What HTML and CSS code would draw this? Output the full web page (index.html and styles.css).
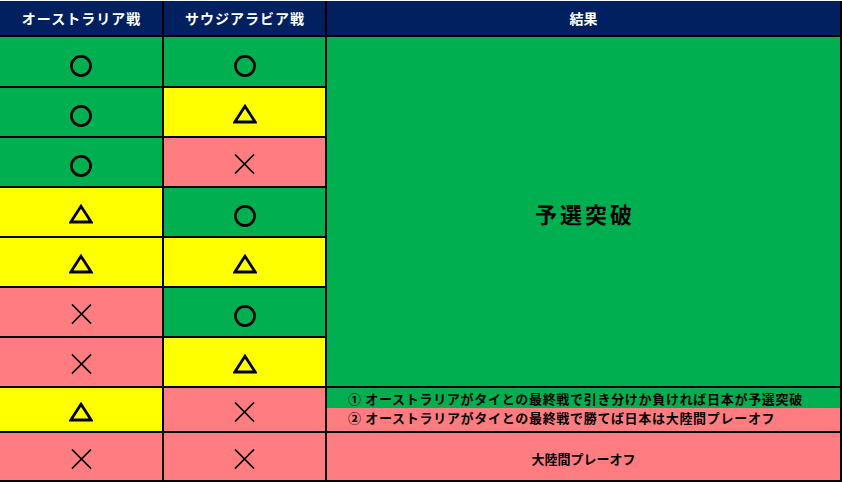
FILE: index.html
```html
<!DOCTYPE html>
<html lang="ja">
<head>
<meta charset="utf-8">
<link rel="stylesheet" href="styles.css">
</head>
<body>
<svg width="0" height="0" class="defs">
  <defs>
    <symbol id="maru" viewBox="0 0 24 24"><circle cx="12" cy="12" r="9.6" fill="none" stroke="#000" stroke-width="2.6"/></symbol>
    <symbol id="sankaku" viewBox="0 0 24 20"><polygon points="12,2.2 22.2,18 1.8,18" fill="none" stroke="#000" stroke-width="2.8" stroke-linejoin="miter"/></symbol>
    <symbol id="batsu" viewBox="0 0 24 22"><path d="M2 1 L22 21 M22 1 L2 21" fill="none" stroke="#000" stroke-width="1.6"/></symbol>
  </defs>
</svg>
<div class="table">
  <div class="head">オーストラリア戦</div>
  <div class="head">サウジアラビア戦</div>
  <div class="head result-head">結果</div>

  <div class="cell green"><svg class="sym maru"><use href="#maru"/></svg></div>
  <div class="cell green"><svg class="sym maru"><use href="#maru"/></svg></div>
  <div class="big green">予選突破</div>

  <div class="cell green"><svg class="sym maru"><use href="#maru"/></svg></div>
  <div class="cell yellow"><svg class="sym tri"><use href="#sankaku"/></svg></div>

  <div class="cell green"><svg class="sym maru"><use href="#maru"/></svg></div>
  <div class="cell pink"><svg class="sym cross"><use href="#batsu"/></svg></div>

  <div class="cell yellow"><svg class="sym tri"><use href="#sankaku"/></svg></div>
  <div class="cell green"><svg class="sym maru"><use href="#maru"/></svg></div>

  <div class="cell yellow"><svg class="sym tri"><use href="#sankaku"/></svg></div>
  <div class="cell yellow"><svg class="sym tri"><use href="#sankaku"/></svg></div>

  <div class="cell pink"><svg class="sym cross"><use href="#batsu"/></svg></div>
  <div class="cell green"><svg class="sym maru"><use href="#maru"/></svg></div>

  <div class="cell pink"><svg class="sym cross"><use href="#batsu"/></svg></div>
  <div class="cell yellow"><svg class="sym tri"><use href="#sankaku"/></svg></div>

  <div class="cell yellow"><svg class="sym tri"><use href="#sankaku"/></svg></div>
  <div class="cell pink"><svg class="sym cross"><use href="#batsu"/></svg></div>
  <div class="split">
    <div class="note green note-a">① オーストラリアがタイとの最終戦で引き分けか負ければ日本が予選突破</div>
    <div class="note pink note-b">② オーストラリアがタイとの最終戦で勝てば日本は大陸間プレーオフ</div>
  </div>

  <div class="cell pink"><svg class="sym cross"><use href="#batsu"/></svg></div>
  <div class="cell pink"><svg class="sym cross"><use href="#batsu"/></svg></div>
  <div class="cell pink playoff">大陸間プレーオフ</div>
</div>
</body>
</html>
```
FILE: styles.css
```css
html, body {
  margin: 0;
  padding: 0;
  background: #ffffff;
}
body {
  font-family: "Noto Sans CJK JP", "Noto Sans", sans-serif;
  width: 842px;
  height: 483px;
  overflow: hidden;
}
.defs {
  position: absolute;
  width: 0;
  height: 0;
}
.table {
  margin-top: 1px;
  display: grid;
  grid-template-columns: 162px 161px 513px;
  grid-template-rows: 34px 49px repeat(6, 48px) 43px 47px;
  gap: 2px;
  padding: 0 2px 2px 0;
  background: #000000;
  width: 842px;
  box-sizing: border-box;
}
.head {
  background: #002060;
  color: #ffffff;
  font-weight: 700;
  font-size: 14px;
  letter-spacing: 1px;
  display: flex;
  align-items: center;
  justify-content: center;
  padding-left: 1px;
}
.result-head {
  letter-spacing: 0;
  padding-left: 0;
}
.green { background: #00b050; }
.yellow { background: #ffff00; }
.pink { background: #ff7c80; }
.cell {
  display: flex;
  align-items: center;
  justify-content: center;
}
.sym {
  display: block;
}
.maru {
  width: 24px;
  height: 24px;
  margin-top: 8px;
}
.tri {
  width: 24px;
  height: 20px;
  margin-top: 4px;
}
.cross {
  width: 23px;
  height: 22px;
  margin-top: 4px;
}
.big {
  grid-row: span 7;
  display: flex;
  align-items: center;
  justify-content: center;
  font-size: 22px;
  font-weight: 700;
  letter-spacing: 3px;
  color: #000;
  padding-left: 3px;
  padding-top: 2px;
}
.split {
  display: flex;
  flex-direction: column;
}
.note {
  font-size: 13px;
  font-weight: 700;
  letter-spacing: 0.7px;
  color: #000;
  padding-left: 21px;
  display: flex;
  align-items: center;
  white-space: nowrap;
}
.note-a {
  height: 20px;
}
.note-b {
  flex: 1;
  padding-bottom: 4px;
}
.playoff {
  font-size: 13px;
  font-weight: 700;
  color: #000;
  padding-top: 4px;
}
```
